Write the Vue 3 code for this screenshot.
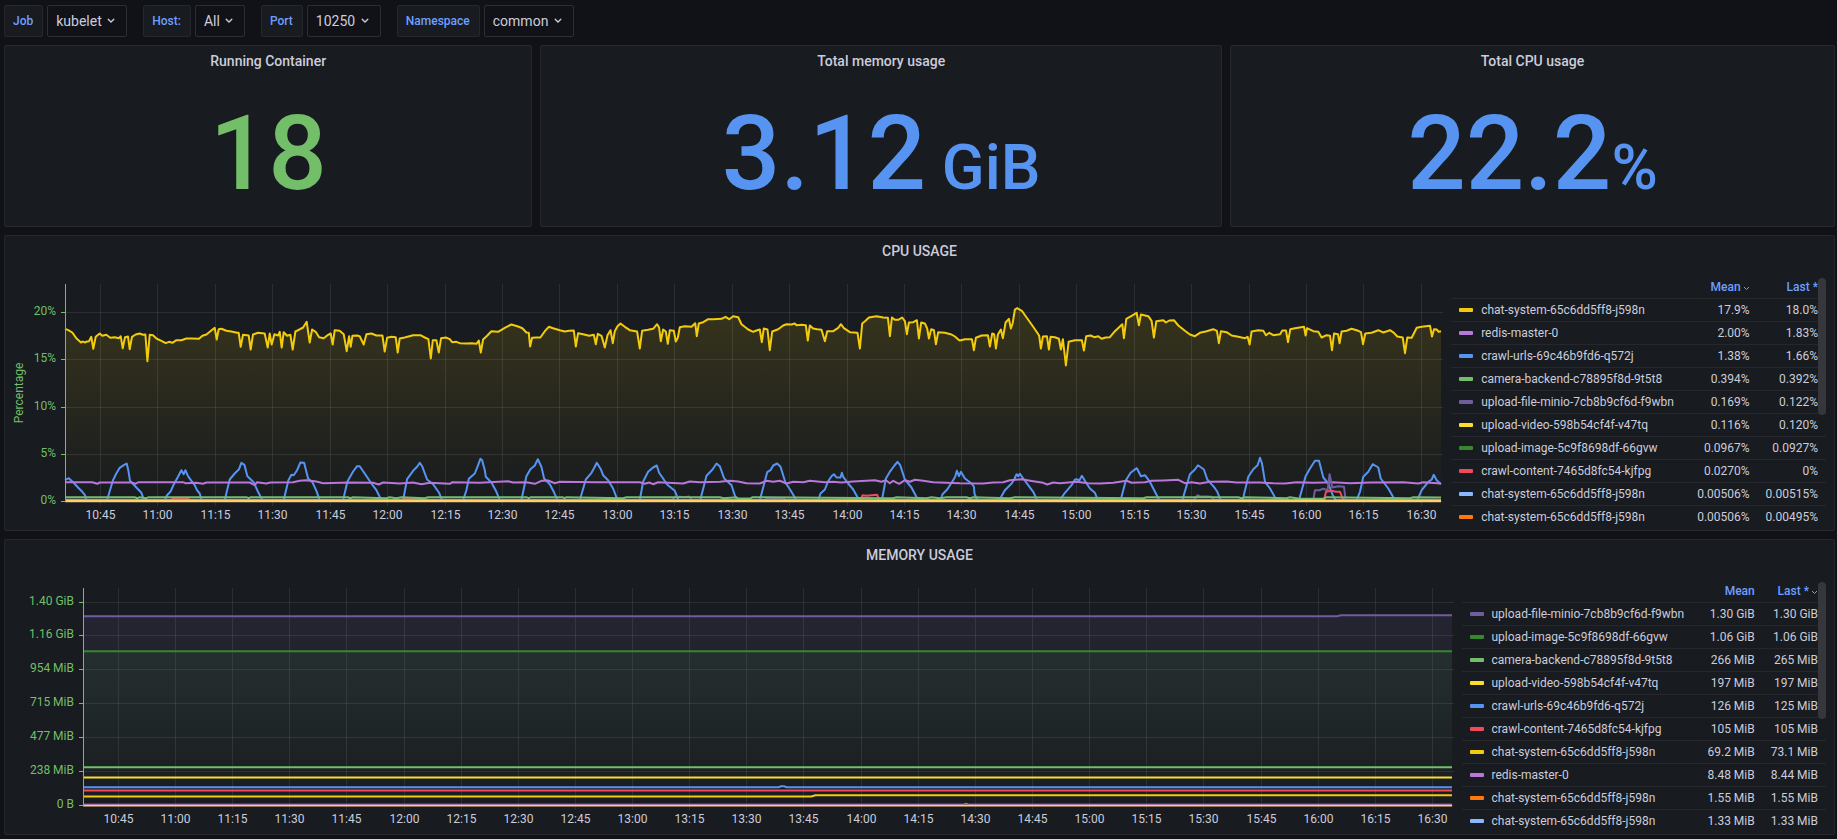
<script setup>
import { computed, onBeforeUnmount, onMounted, ref } from 'vue';

const variables = [
  { id: 'job', label: 'Job', value: 'kubelet' },
  { id: 'host', label: 'Host:', value: 'All' },
  { id: 'port', label: 'Port', value: '10250' },
  { id: 'namespace', label: 'Namespace', value: 'common' },
];

const stats = [
  { id: 'containers', title: 'Running Container', value: '18', unit: '', color: 'green' },
  { id: 'memory', title: 'Total memory usage', value: '3.12', unit: ' GiB', color: 'blue' },
  { id: 'cpu', title: 'Total CPU usage', value: '22.2', unit: '%', color: 'blue' },
];

const colors = {
  gold: '#f2cc0c',
  purple: '#b877d9',
  blue: '#5794f2',
  green: '#73bf69',
  violet: '#705da0',
  yellow: '#fade2a',
  darkGreen: '#37872d',
  red: '#f2495c',
  lightBlue: '#8ab8ff',
  orange: '#ff780a',
  sand: '#ffcb7d',
};

// CPU samples are packed as "time,level" pairs: 4127 time units across the
// range, level 694 is 0% and every 28.35 below that is one percent.
const T_SPAN = 4127;
const unpack = (offset, text) =>
  text
    .trim()
    .split(/\s+/)
    .map((pair) => {
      const [t, level] = pair.split(',').map(Number);
      return [(t + offset) / T_SPAN, (694 - level) / 28.35];
    });

const chatSystem = [
  ...unpack(-196, `196,176 206,180 218,187 230,204 244,217 250,214 255,217 262,214 268,213 275,200 281,236 288,200 300,190
    308,197 320,194 332,203 345,201 358,204 363,198 369,234 376,201 385,199 390,237 397,200 408,193 420,190 430,194
    437,193 443,273 450,194 460,195 470,205 485,212 498,219 508,215 518,218 530,210 545,210 560,205 575,205 598,206
    608,197 620,193 632,183 645,173 651,208 657,177 665,176 680,182 695,184 712,188 717,188 723,230 730,194 747,196
    753,238 760,193 775,188 795,190 804,232 810,190 816,223 824,192 835,196 840,185 846,232 852,186 862,197 872,194
    879,238 887,184 897,179 910,172 921,155 930,217 937,178 948,185 958,201 972,204 985,194 993,190 999,223 1005,180
    1020,182 1032,192 1041,243 1048,198 1053,230 1058,197 1072,196 1080,198 1092,223 1100,192 1115,190 1130,196
    1148,196 1155,244 1162,203 1175,200 1188,201 1194,247 1200,205 1215,202 1240,195 1262,195 1275,202 1286,207
    1293,265 1299,210 1310,210 1317,247 1324,204 1338,202 1350,207 1357,216 1370,215 1380,219 1400,220 1415,219
    1430,221 1437,211 1443,247`),
  ...unpack(1244, `10,208 22,197 35,183 55,185 75,173 95,163 115,169 128,174 140,187 147,188 151,229 157,203 170,202
    182,202 195,183 207,170 220,174 240,180 255,184 268,182 282,181 288,229 295,189 310,192 328,197 342,194 348,222
    354,191 365,197 375,232 383,195 392,180 399,219 405,183 413,168 422,160 435,170 450,180 472,184 480,235 487,182
    505,179 520,176 532,162 538,172 543,213 550,178 558,184 564,221 570,180 582,182 588,214 594,203 600,171 615,168
    635,170 646,159 651,198 657,160 670,156 685,147 700,147 725,146 737,140 748,147 760,138 775,141 785,162 805,178
    820,185 832,180 840,178 846,216 852,175 863,178 870,240 877,184 895,177 910,166 920,162 935,163 945,160 950,165
    965,164 978,165 984,211 990,166 1000,175 1012,177 1025,179 1035,213 1042,183 1060,183 1075,173 1083,162 1092,174
    1110,186 1133,188 1140,235 1147,160 1157,152 1167,142 1190,138 1210,142 1224,143 1230,198 1236,142 1245,149
    1255,149 1267,142 1275,153 1281,192 1287,157 1300,156 1311,150 1317,205 1324,157 1335,160 1342,175 1347,205
    1354,177 1362,180 1368,222 1375,186 1395,188 1415,193 1425,199 1438,210`),
  ...unpack(2684, `0,211 15,207 36,207 42,240 48,203 65,196 84,195 90,229 97,190 103,193 108,235 114,193 123,178
    129,204 137,157 147,146 153,175 158,160 165,118 172,114 187,123 200,142 215,163 230,185 238,197 243,235 249,199
    261,198 267,238 272,200 285,201 297,206 303,238 309,207 318,286 326,215 345,210 366,210 372,241 379,198 392,196
    403,201 415,198 425,206 437,202 450,201 465,183 487,162 492,204 499,146 515,137 530,128 537,165 543,133 565,138
    575,152 582,202 589,153 610,150 618,157 628,151 642,150 655,166 675,182 690,193 705,198 720,188 740,183 760,177
    771,182 777,219 783,183 800,186 815,196 835,200 855,204 863,200 869,223 875,184 895,180 910,182 918,195 928,188
    940,195 960,192 967,181 978,181 984,216 991,177 1005,174 1032,170 1037,196 1041,174 1060,183 1075,185 1085,202
    1100,195 1110,197 1116,240 1122,190 1134,192 1139,219 1145,184 1160,182 1175,176 1195,182 1203,186 1209,222
    1216,190 1235,188 1255,180 1270,187 1290,180 1302,188 1312,199 1328,202 1335,249 1342,202 1355,203 1370,173
    1385,170 1410,167 1416,199 1422,177 1430,178 1436,185 1443,183`),
];

const crawlUrls = [
  ...unpack(-196, `196,630 207,624 222,638 235,652 248,665 256,675 260,690 322,690 340,630 350,610 360,593 372,585 381,580
    386,600 391,632 405,647 425,668 433,690 496,690 502,675 512,665 522,643 535,620 545,600 552,612 557,600 565,618
    575,632 585,645 592,660 600,670 606,690 675,690 690,628 705,610 718,597 725,578 734,584 743,618 762,636 775,665
    788,690 852,690 866,630 875,614 882,615 892,600 902,577 913,578 925,625 938,636 950,662 960,690 1030,690 1043,634
    1060,604 1072,588 1080,588 1095,610 1115,640 1130,660 1145,690 1210,690 1222,627 1240,602 1252,590 1260,578
    1268,590 1282,628 1300,642 1318,668 1327,690 1390,690 1400,660 1407,626 1425,610 1435,585`),
  ...unpack(1244, `2,566 7,570 15,600 18,620 35,637 50,665 60,690 125,690 140,618 152,597 165,586 174,567 185,590 193,625
    210,642 222,665 233,690 300,690 318,628 335,608 345,590 351,578 363,597 370,615 385,630 400,655 413,690 480,690
    490,635 505,605 520,592 531,586 538,608 550,625 562,643 585,662 596,690 661,690 680,617 698,598 710,580 720,588
    733,625 755,645 770,690 840,690 862,606 872,600 880,586 892,580 902,590 917,638 932,660 950,690 1015,690 1022,670
    1035,658 1045,633 1055,618 1062,612 1070,622 1082,622 1086,608 1090,620 1105,640 1120,658 1138,690 1206,690
    1218,625 1232,602 1244,586 1253,575 1261,585 1275,628 1295,652 1315,690 1382,690 1388,672 1402,658 1417,635
    1426,620 1431,602 1437,618 1443,605 1455,625 1475,640 1482,650 1484,672 1493,690`),
  ...unpack(2684, `118,690 135,660 155,640 163,628 170,612 175,618 180,611 190,625 205,645 220,665 232,690 300,690 315,668
    335,645 345,628 352,627 358,632 366,617 375,632 390,655 405,668 414,690 482,690 498,630 512,608 522,600 531,594
    543,618 555,615 568,632 580,655 598,690 667,690 690,612 705,598 714,585 732,598 742,628 762,650 772,665 782,690
    848,690 865,620 880,597 893,585 900,563 906,580 915,635 930,655 950,690 1017,690 1037,618 1050,595 1065,572
    1077,572 1090,622 1105,640 1117,672 1127,690 1190,690 1200,665 1210,620 1225,605 1238,582 1255,592 1262,625
    1285,655 1305,690 1372,690 1385,660 1405,635 1415,628 1421,614 1430,630 1443,642`),
];

const redisMaster = [
  ...unpack(-196, `196,636 278,636 293,641 300,637 395,637 408,641 415,636 550,636 557,639 590,638 610,641 620,637 750,637
    765,645 772,636 800,640 812,637 880,636 900,632 920,630 950,634 970,639 1050,637 1120,638 1137,643 1150,637
    1200,640 1240,637 1265,642 1290,638 1335,640 1350,641 1358,636`),
  ...unpack(1244, `0,638 85,633 100,637 140,636 165,641 185,632 205,631 225,639 240,635 350,636 480,636 495,641 508,637
    520,642 535,636 610,640 630,634 660,636 720,635 750,632 775,634 800,639 840,640 860,632 880,635 900,632 920,640
    940,635 970,636 990,632 1035,636 1060,635 1085,637 1120,634 1185,630 1205,635 1218,630 1230,639 1240,632 1258,641
    1275,630 1290,635 1305,629 1330,632 1360,636 1440,639`),
  ...unpack(2684, `0,639 70,640 100,637 130,636 150,630 185,627 220,633 250,638 262,643 280,637 300,639 350,635 385,639
    420,640 460,638 500,632 515,638 555,636 575,632 610,631 655,629 675,639 695,636 720,640 750,635 800,634 830,637
    900,637 940,639 975,640 1010,636 1060,638 1120,636 1170,639 1230,637 1330,636 1375,640 1390,636 1443,640`),
];

const cameraBackend = [
  ...unpack(-196, '196,681 405,681 413,684 420,681 440,684 447,681 740,681 747,684 753,681 1045,681 1050,684 1060,681 1160,684 1170,681 1190,684 1205,681 1275,684 1285,681'),
  ...unpack(1244, '140,681 147,684 153,681 248,681 254,684 260,681 430,684 440,681 720,681 732,684 770,681 775,685 812,685 818,681 1240,684 1250,681 1340,684 1355,681 1380,684 1400,681'),
  ...unpack(2684, '20,681 30,684 40,681 150,684 165,681 550,684 560,681 835,681 845,684 855,681 980,684 990,681 1020,686 1090,686 1100,681 1350,684 1360,681 1443,682'),
];

const uploadMinio = [
  ...unpack(-196, '196,689'),
  ...unpack(1244, '576,689 585,681 600,680 615,681 628,679 636,689 856,689 862,684 912,684 916,689'),
  ...unpack(2684, '703,689 712,675 720,678 755,680 761,689 1060,689 1065,660 1078,660 1090,656 1103,660 1109,612 1117,652 1135,648 1152,650 1157,689 1443,689'),
];

const crawlContent = [
  ...unpack(-196, '196,691 515,690 520,685 565,685 570,690 1206,690 1212,686 1255,686 1260,690'),
  ...unpack(1244, '1143,690 1148,675 1160,677 1192,674 1198,690'),
  ...unpack(2684, '1092,690 1098,665 1115,662 1128,665 1140,665 1150,690 1443,691'),
];

const flat = (value) => [[0, value], [1, value]];

// One tick every 15 minutes, the first one 9 minutes into the range.
const timeTicks = Array.from({ length: 24 }, (_, i) => {
  const minutes = 10 * 60 + 45 + i * 15;
  const hh = String(Math.floor(minutes / 60)).padStart(2, '0');
  const mm = String(minutes % 60).padStart(2, '0');
  return { label: `${hh}:${mm}`, at: (i + 0.61) / 23.96 };
});

const charts = [
  {
    id: 'cpu-usage',
    title: 'CPU USAGE',
    axisLabel: 'Percentage',
    left: 52,
    pixelsPerUnit: 9.45,
    sortedBy: 'mean',
    yTicks: [0, 5, 10, 15, 20].map((v) => ({ label: `${v}%`, value: v })),
    series: [
      { color: colors.gold, points: chatSystem, fill: 0.14 },
      { color: colors.blue, points: crawlUrls },
      { color: colors.purple, points: redisMaster },
      { color: colors.violet, points: uploadMinio },
      { color: colors.red, points: crawlContent },
      { color: colors.green, points: cameraBackend },
      { color: colors.yellow, points: flat(0.12) },
      { color: colors.sand, points: flat(0.02) },
    ],
    legend: [
      { name: 'chat-system-65c6dd5ff8-j598n', color: colors.gold, mean: '17.9%', last: '18.0%' },
      { name: 'redis-master-0', color: colors.purple, mean: '2.00%', last: '1.83%' },
      { name: 'crawl-urls-69c46b9fd6-q572j', color: colors.blue, mean: '1.38%', last: '1.66%' },
      { name: 'camera-backend-c78895f8d-9t5t8', color: colors.green, mean: '0.394%', last: '0.392%' },
      { name: 'upload-file-minio-7cb8b9cf6d-f9wbn', color: colors.violet, mean: '0.169%', last: '0.122%' },
      { name: 'upload-video-598b54cf4f-v47tq', color: colors.yellow, mean: '0.116%', last: '0.120%' },
      { name: 'upload-image-5c9f8698df-66gvw', color: colors.darkGreen, mean: '0.0967%', last: '0.0927%' },
      { name: 'crawl-content-7465d8fc54-kjfpg', color: colors.red, mean: '0.0270%', last: '0%' },
      { name: 'chat-system-65c6dd5ff8-j598n', color: colors.lightBlue, mean: '0.00506%', last: '0.00515%' },
      { name: 'chat-system-65c6dd5ff8-j598n', color: colors.orange, mean: '0.00506%', last: '0.00495%' },
    ],
  },
  {
    id: 'memory-usage',
    title: 'MEMORY USAGE',
    axisLabel: '',
    left: 70,
    pixelsPerUnit: 0.1422,
    sortedBy: 'last',
    yTicks: [
      { label: '0 B', value: 0 },
      { label: '238 MiB', value: 238.4 },
      { label: '477 MiB', value: 476.8 },
      { label: '715 MiB', value: 715.3 },
      { label: '954 MiB', value: 953.7 },
      { label: '1.16 GiB', value: 1192.1 },
      { label: '1.40 GiB', value: 1430.5 },
    ],
    series: [
      { color: colors.violet, points: [[0, 1331], [0.916, 1331], [0.919, 1338], [1, 1338]], fill: 0.15 },
      { color: colors.darkGreen, points: flat(1085), fill: 0.12 },
      { color: colors.green, points: flat(269) },
      { color: colors.yellow, points: flat(197) },
      { color: colors.blue, points: [[0, 128], [0.508, 128], [0.51, 135], [0.512, 135], [0.514, 128], [1, 128]] },
      { color: colors.red, points: flat(106) },
      { color: colors.gold, points: [[0, 63], [0.532, 63], [0.535, 72], [1, 72]] },
      { color: colors.sand, points: flat(1) },
      { color: colors.purple, points: [[0, 9], [0.643, 9], [0.645, 16], [0.647, 9], [1, 9]], thin: true },
    ],
    legend: [
      { name: 'upload-file-minio-7cb8b9cf6d-f9wbn', color: colors.violet, mean: '1.30 GiB', last: '1.30 GiB' },
      { name: 'upload-image-5c9f8698df-66gvw', color: colors.darkGreen, mean: '1.06 GiB', last: '1.06 GiB' },
      { name: 'camera-backend-c78895f8d-9t5t8', color: colors.green, mean: '266 MiB', last: '265 MiB' },
      { name: 'upload-video-598b54cf4f-v47tq', color: colors.yellow, mean: '197 MiB', last: '197 MiB' },
      { name: 'crawl-urls-69c46b9fd6-q572j', color: colors.blue, mean: '126 MiB', last: '125 MiB' },
      { name: 'crawl-content-7465d8fc54-kjfpg', color: colors.red, mean: '105 MiB', last: '105 MiB' },
      { name: 'chat-system-65c6dd5ff8-j598n', color: colors.gold, mean: '69.2 MiB', last: '73.1 MiB' },
      { name: 'redis-master-0', color: colors.purple, mean: '8.48 MiB', last: '8.44 MiB' },
      { name: 'chat-system-65c6dd5ff8-j598n', color: colors.orange, mean: '1.55 MiB', last: '1.55 MiB' },
      { name: 'chat-system-65c6dd5ff8-j598n', color: colors.lightBlue, mean: '1.33 MiB', last: '1.33 MiB' },
    ],
  },
];

const PLOT_TOP = 8;
const PLOT_BOTTOM = 225;

const plotEls = ref([]);
const widths = ref(charts.map(() => 1400));

const measure = () => {
  widths.value = plotEls.value.map((el) => Math.max(320, Math.round(el.clientWidth)));
};

let observer = null;
onMounted(() => {
  measure();
  observer = new ResizeObserver(measure);
  plotEls.value.forEach((el) => observer.observe(el));
});
onBeforeUnmount(() => observer?.disconnect());

const drawn = computed(() =>
  charts.map((chart, i) => {
    const width = widths.value[i];
    const right = width - 2;
    const x = (at) => chart.left + (right - chart.left) * at;
    const y = (value) => PLOT_BOTTOM - value * chart.pixelsPerUnit;
    const skip = Math.max(1, Math.ceil(44 / (x(timeTicks[1].at) - x(timeTicks[0].at))));
    return {
      ...chart,
      width,
      xTicks: timeTicks.filter((_, n) => n % skip === 0).map((t) => ({ label: t.label, x: Math.round(x(t.at)) + 0.5 })),
      yTicks: chart.yTicks.map((t) => ({ label: t.label, y: Math.round(y(t.value)) + 0.5 })),
      series: chart.series.map((s) => {
        const line = s.points.map(([at, v]) => `${x(at).toFixed(1)} ${(y(v) + 0.5).toFixed(1)}`).join('L');
        return { ...s, line: `M${line}`, area: `M${x(0)} ${PLOT_BOTTOM}L${line}L${right} ${PLOT_BOTTOM}Z` };
      }),
    };
  })
);
</script>

<template>
  <main class="dashboard">
    <form class="submenu" @submit.prevent>
      <div v-for="item in variables" :key="item.id" class="variable">
        <label class="variable__label" :for="item.id">{{ item.label }}</label>
        <div class="variable__field">
          <select :id="item.id" class="variable__select">
            <option>{{ item.value }}</option>
          </select>
          <svg class="variable__chevron" width="8" height="6" viewBox="0 0 8 6" aria-hidden="true">
            <path d="M1.2 1.2L4 4L6.8 1.2" />
          </svg>
        </div>
      </div>
    </form>

    <div class="panels">
      <section v-for="stat in stats" :key="stat.id" class="panel" :class="`panel--${stat.id}`">
        <h2 class="panel__title">{{ stat.title }}</h2>
        <div class="stat" :class="`stat--${stat.color}`">
          <span class="stat__value">{{ stat.value }}</span>
          <span v-if="stat.unit" class="stat__unit">{{ stat.unit }}</span>
        </div>
      </section>

      <section v-for="chart in drawn" :key="chart.id" class="panel panel--wide">
        <h2 class="panel__title">{{ chart.title }}</h2>
        <div class="graph">
          <div ref="plotEls" class="graph__plot">
            <svg class="graph__svg" :viewBox="`0 0 ${chart.width} 248`" :width="chart.width" height="248" role="img" :aria-label="chart.title">
              <defs>
                <linearGradient v-for="(s, n) in chart.series" :id="`${chart.id}-${n}`" :key="n" x1="0" y1="0" x2="0" y2="1">
                  <stop offset="0" :stop-color="s.color" :stop-opacity="s.fill ?? 0" />
                  <stop offset="1" :stop-color="s.color" stop-opacity="0" />
                </linearGradient>
              </defs>

              <g class="graph__grid">
                <path v-for="t in chart.xTicks" :key="t.label" :d="`M${t.x} ${PLOT_TOP}V${PLOT_BOTTOM + 5}`" />
                <path v-for="t in chart.yTicks" :key="t.label" :d="`M${chart.left} ${t.y}H${chart.width}`" />
              </g>

              <template v-for="(s, n) in chart.series" :key="n">
                <path v-if="s.fill" :d="s.area" :fill="`url(#${chart.id}-${n})`" />
                <path class="graph__line" :class="{ 'graph__line--thin': s.thin }" :d="s.line" :stroke="s.color" />
              </template>

              <g class="graph__axis">
                <path :d="`M${chart.left + 0.5} ${PLOT_TOP}V${PLOT_BOTTOM + 1}`" />
                <path v-for="t in chart.yTicks" :key="t.label" :d="`M${chart.left - 4} ${t.y}h4`" />
              </g>

              <g class="graph__ylabels">
                <text v-for="t in chart.yTicks" :key="t.label" :x="chart.left - 9" :y="t.y + 2.5">{{ t.label }}</text>
              </g>
              <g class="graph__xlabels">
                <text v-for="t in chart.xTicks" :key="t.label" :x="t.x" y="243">{{ t.label }}</text>
              </g>
              <text v-if="chart.axisLabel" class="graph__axis-title" transform="translate(10 117) rotate(-90)">
                {{ chart.axisLabel }}
              </text>
            </svg>
          </div>

          <div class="legend">
            <table class="legend__table">
              <thead>
                <tr>
                  <th class="legend__series" aria-label="Series"></th>
                  <th v-for="col in ['mean', 'last']" :key="col" scope="col">
                    {{ col === 'mean' ? 'Mean' : 'Last *' }}
                    <svg v-if="chart.sortedBy === col" class="legend__sort" width="7" height="6" viewBox="0 0 7 6" aria-hidden="true">
                      <path d="M1 2L3.5 4.5L6 2" />
                    </svg>
                  </th>
                </tr>
              </thead>
              <tbody>
                <tr v-for="(row, n) in chart.legend" :key="n">
                  <td>
                    <span class="legend__name">
                      <span class="legend__swatch" :style="{ background: row.color }"></span>
                      {{ row.name }}
                    </span>
                  </td>
                  <td class="legend__number">{{ row.mean }}</td>
                  <td class="legend__number">{{ row.last }}</td>
                </tr>
              </tbody>
            </table>
            <div class="legend__scrollbar"></div>
          </div>
        </div>
      </section>
    </div>
  </main>
</template>

<style>
body {
  margin: 0;
  background: #111217;
}
</style>

<style scoped>
.dashboard {
  box-sizing: border-box;
  padding: 5px 2px 4px 4px;
  border-bottom: 1px solid #d8d9da;
  background: #111217;
  color: #ccccdc;
  font-family: Roboto, 'Liberation Sans', sans-serif;
  font-size: 12px;
}

.submenu {
  display: flex;
  flex-wrap: wrap;
  gap: 8px 16px;
  margin-bottom: 8px;
}

.variable {
  display: flex;
  gap: 4px;
}

.variable__label {
  box-sizing: border-box;
  height: 32px;
  padding: 0 9px 0 8px;
  border: 1px solid #25272c;
  border-radius: 2px;
  background: #181b1f;
  color: #6e9fff;
  font-weight: 500;
  line-height: 30px;
}

.variable__field {
  display: grid;
  align-items: center;
}

.variable__select {
  grid-area: 1 / 1;
  box-sizing: border-box;
  height: 32px;
  padding: 0 24px 0 8px;
  border: 1px solid #2d2e34;
  border-radius: 2px;
  appearance: none;
  background: #111217;
  color: #ccccdc;
  font: 14px Roboto, 'Liberation Sans', sans-serif;
}

.variable__chevron {
  grid-area: 1 / 1;
  justify-self: end;
  margin-right: 12px;
  fill: none;
  stroke: #ccccdc;
  stroke-width: 1.3;
  stroke-linecap: round;
  pointer-events: none;
}

.panels {
  display: grid;
  grid-template-columns: repeat(24, minmax(0, 1fr));
  gap: 8px;
}

.panel {
  min-width: 0;
  border: 1px solid #25272c;
  border-radius: 2px;
  background: #181b1f;
}

.panel--containers {
  grid-column: span 7;
}

.panel--memory {
  grid-column: span 9;
}

.panel--cpu {
  grid-column: span 8;
}

.panel--wide {
  grid-column: 1 / -1;
}

.panel__title {
  margin: 0;
  font-size: 14px;
  font-weight: 500;
  line-height: 30px;
  text-align: center;
}

.stat {
  display: flex;
  align-items: baseline;
  justify-content: center;
  padding: 18px 0 12px;
  font-weight: 500;
  line-height: 120px;
  white-space: pre;
}

.stat--green {
  color: #73bf69;
}

.stat--blue {
  color: #5794f2;
}

.stat__value {
  font-size: 103px;
}

.stat__unit {
  font-size: 63px;
  line-height: 1;
}

.graph {
  display: flex;
  gap: 8px;
  height: 248px;
  padding: 10px 8px 6px;
}

.graph__plot {
  flex: 1;
  min-width: 0;
  overflow: hidden;
}

.graph__svg {
  display: block;
}

.graph__grid {
  fill: none;
  stroke: rgba(240, 250, 255, 0.09);
}

.graph__line {
  fill: none;
  stroke-width: 2;
  stroke-linejoin: round;
}

.graph__line--thin {
  stroke-width: 1;
}

.graph__axis {
  fill: none;
  stroke: #73bf69;
}

.graph__ylabels {
  fill: #73bf69;
  text-anchor: end;
}

.graph__xlabels {
  fill: #ccccdc;
  text-anchor: middle;
}

.graph__axis-title {
  fill: #73bf69;
  text-anchor: middle;
}

.legend {
  position: relative;
  flex: none;
  overflow: hidden;
}

.legend__table {
  border-spacing: 0;
  white-space: nowrap;
}

.legend__table th,
.legend__table td {
  box-sizing: border-box;
  height: 23px;
  padding: 0 8px;
  border-bottom: 1px solid #25272c;
  line-height: 22px;
}

.legend__table th {
  color: #6e9fff;
  font-weight: 500;
  text-align: right;
}

.legend__table .legend__series {
  min-width: 238px;
}

.legend__sort {
  margin-left: -1px;
  fill: none;
  stroke: #6e9fff;
}

.legend__name {
  display: flex;
  align-items: center;
  gap: 8px;
}

.legend__swatch {
  width: 14px;
  height: 4px;
  border-radius: 1px;
}

.legend__number {
  text-align: right;
}

.legend__scrollbar {
  position: absolute;
  top: 2px;
  right: 0;
  width: 8px;
  height: 137px;
  border-radius: 4px;
  background: #36373d;
}
</style>
